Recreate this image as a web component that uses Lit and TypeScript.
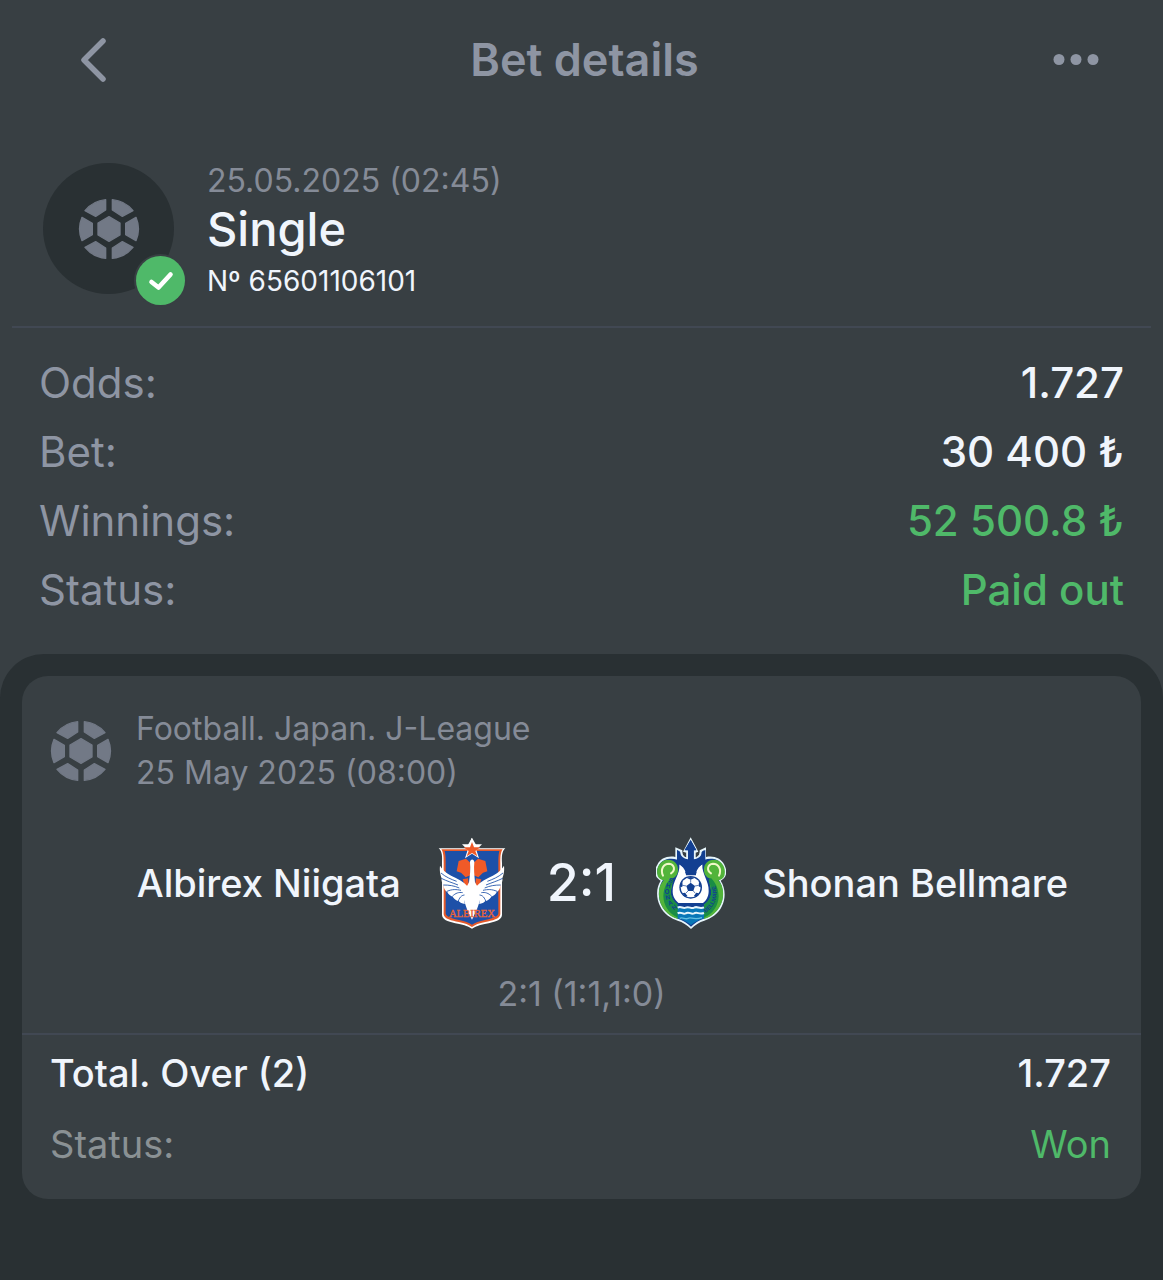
import { LitElement, html, svg, css } from "lit";
import { customElement, property } from "lit/decorators.js";

interface Fact {
  label: string;
  value: string;
  positive?: boolean;
}

const summary: Fact[] = [
  { label: "Odds:", value: "1.727" },
  { label: "Bet:", value: "30 400 ₺" },
  { label: "Winnings:", value: "52 500.8 ₺", positive: true },
  { label: "Status:", value: "Paid out", positive: true },
];

/* Football made of six rim panels around a hexagon. */
@customElement("ball-icon")
export class BallIcon extends LitElement {
  static styles = css`
    :host {
      display: block;
      flex: none;
      width: 62px;
      height: 62px;
      color: #727986;
    }
    svg {
      display: block;
      width: 100%;
      height: 100%;
    }
  `;

  render() {
    const corner = "M-10 -88V-57L-40 -38L-72 -55A91 91 0 0 1 -10 -88Z";
    const side = "M-81 -35L-50 -17V17L-81 35A89 89 0 0 1 -81 -35Z";
    return html`<svg viewBox="-93 -93 186 186" aria-hidden="true">
      <g fill="currentColor" stroke="currentColor" stroke-width="4" stroke-linejoin="round">
        <path d="M0 -37L33 -18V18L0 37L-33 18V-18Z" />
        <path d=${corner} />
        <path d=${corner} transform="scale(-1 1)" />
        <path d=${corner} transform="scale(1 -1)" />
        <path d=${corner} transform="scale(-1 -1)" />
        <path d=${side} />
        <path d=${side} transform="scale(-1 1)" />
      </g>
    </svg>`;
  }
}

@customElement("team-crest")
export class TeamCrest extends LitElement {
  @property() team = "";

  static styles = css`
    :host {
      display: block;
      flex: none;
      width: 70px;
      height: 92px;
    }
    svg {
      display: block;
      width: 100%;
      height: 100%;
    }
    .serif {
      font-family: "Liberation Serif", serif;
    }
    .sans {
      font-family: "Liberation Sans", sans-serif;
      font-weight: 700;
    }
  `;

  private albirex() {
    const wing = svg`
      <path fill="#fff" d="M153 195C143 178 128 167 108 158C91 151 74 141 62 122C60 140 64 151 67 160C65 167 69 176 73 182C73 190 78 197 84 201C87 209 94 213 100 215C105 223 112 227 118 228C124 235 132 237 138 237L153 245Z"/>
      <g stroke="#1d50a8" stroke-width="2.6" fill="none">
        <path d="M65 144C80 157 96 163 112 169"/>
        <path d="M66 160C84 169 99 173 116 180"/>
        <path d="M72 180C90 180 104 182 120 189"/>
        <path d="M83 199C99 192 111 193 125 196"/>
        <path d="M99 214C109 204 118 201 130 203"/>
        <path d="M117 228C122 214 129 210 137 210"/>
        <path d="M137 236C137 226 139 220 143 216"/>
      </g>`;
    return html`<svg viewBox="53 36 210 276" role="img" aria-label="Albirex Niigata crest">
      <path fill="#fff" d="M58 70H140L158 38L176 70H258C247 80 247 95 248 115V270C247 287 221 292 200 296C180 300 168 304 158 311C148 304 136 300 116 296C95 292 69 287 68 270V115C69 95 69 80 58 70Z"/>
      <path fill="#e4592a" d="M66 73H250C243 83 243 98 243 115V268C242 282 219 287 198 291C179 295 168 299 158 306C148 299 137 295 118 291C97 287 74 282 73 268V115C73 98 73 83 66 73Z"/>
      <path fill="#1d50a8" d="M76 78H240C237 90 237 103 237 117V265C236 277 215 281 197 285C179 289 168 293 158 299C148 293 137 289 119 285C101 281 80 277 79 265V117C79 103 79 90 76 78Z"/>
      <path fill="#f05a28" d="M118 108L140 101L153 113V151L139 157L125 143L112 139ZM198 108L176 101L163 113V151L177 157L191 143L204 139Z"/>
      <path fill="#f05a28" d="M130 163L146 160L151 198L137 184ZM186 163L170 160L165 198L179 184Z"/>
      ${wing}
      <g transform="translate(316 0) scale(-1 1)">${wing}</g>
      <path fill="#fff" d="M152 112C153 101 164 101 165 112C163 129 165 150 167 172C177 187 181 202 181 216C181 239 170 261 158 284C146 261 135 239 135 216C135 202 140 187 149 172C152 151 154 132 152 112Z"/>
      <path fill="#fff" d="M157 38L165 58L188 58L171 75L179 100L158 86L137 100L145 75L128 58H150Z"/>
      <path fill="#f05a28" d="M158 51L164 67L183 67L168 78L174 94L158 84L142 94L148 78L133 67H152Z"/>
      <text class="serif" x="158" y="277" text-anchor="middle" font-size="32" fill="#e86436" stroke="#e86436" stroke-width="1">ALBIREX</text>
    </svg>`;
  }

  private bellmare() {
    const scroll = svg`
      <path fill="#52b43a" d="M58 153C51 127 66 105 89 104C112 104 123 123 118 143C115 155 104 160 99 161C105 168 101 181 98 196C95 216 106 231 119 239V282C89 275 64 246 62 214C60 190 67 176 76 166C67 164 61 160 58 153Z"/>
      <path fill="none" stroke="#f0f8c8" stroke-width="6" stroke-linecap="round" d="M74 152C65 132 76 116 92 116C109 118 112 136 98 145"/>
      <path fill="#1a8d45" d="M98 159L105 164C99 184 96 196 98 208C101 223 110 234 119 239V278C92 266 76 243 75 213C76 188 85 173 98 159Z"/>`;
    return html`<svg viewBox="53 36 210 276" role="img" aria-label="Shonan Bellmare crest">
      <path fill="#e6f5fb" d="M157 37L180 80L172 83V99C184 95 184 86 184 76L203 67V96C226 91 248 100 258 119C271 145 260 160 247 167C261 188 263 219 251 243C240 268 216 281 198 287C183 291 170 300 158 312C146 300 133 291 118 287C100 281 76 268 65 243C53 219 53 188 67 167C52 159 43 142 57 119C66 100 88 91 111 96V67L132 76C132 87 134 95 144 99V83L134 80Z"/>
      <path fill="#123f91" d="M157 45L174 75L166 76V106C184 105 191 95 191 80L198 75V104C220 98 241 101 252 120C263 140 256 155 240 163C256 186 258 217 246 240C234 264 213 276 196 281C181 286 169 294 158 305C147 294 134 286 119 281C101 275 80 262 69 239C58 216 59 187 74 164C56 156 51 138 63 119C74 101 97 98 117 104V75L124 80C124 95 132 105 149 106V76L139 75Z"/>
      <path fill="#fff" d="M123 118C134 126 143 136 143 151H173C173 136 181 126 192 118C190 149 213 168 211 199C211 216 202 229 192 236H123C112 228 103 216 103 199C102 169 126 149 123 118Z"/>
      ${scroll}
      <g transform="translate(316 0) scale(-1 1)">${scroll}</g>
      <path fill="#123f91" d="M116 75L126 81C126 94 136 101 149 103V76H139L157 45L174 76H166V103C181 101 190 94 190 81L201 75V111C193 120 180 123 169 129L175 145H140L147 129C134 124 121 120 116 111Z"/>
      <path fill="none" stroke="#e6f5fb" stroke-width="3" d="M146 84V99C137 97 130 92 128 80M169 84V99C178 97 185 92 187 80"/>
      <circle cx="157" cy="187" r="34" fill="#123f91"/>
      <circle cx="157" cy="187" r="30" fill="#fff"/>
      <g fill="#123f91">
        <path d="M157 173L170 183L165 198H149L144 183Z"/>
        <path d="M144 158L157 164L170 158L157 156ZM182 170L181 184L188 188L186 174ZM132 170L133 184L126 188L128 174ZM174 203L166 214L174 215L182 205ZM140 203L148 214L140 215L132 205Z"/>
      </g>
      <path fill="none" stroke="#123f91" stroke-width="2" d="M157 173V164M170 183L181 181M165 198L171 205M149 198L142 205M144 183L133 181"/>
      <path fill="#0877b7" d="M118 234H197V280C180 285 169 292 158 300C147 292 136 285 118 280Z"/>
      <path fill="#123f91" d="M118 234H197V247C186 255 179 243 168 248C158 256 149 243 139 248C130 253 124 248 118 245Z"/>
      <path fill="none" stroke="#e6f5fb" stroke-width="6" d="M118 248C128 242 133 252 142 248C152 242 158 253 167 248C177 242 182 253 197 247M118 265C128 258 133 270 142 265C152 258 158 270 167 265C177 259 182 270 197 264"/>
      <path fill="none" stroke="#62bfe1" stroke-width="4" d="M124 280C134 274 140 285 149 280C158 275 165 286 191 278"/>
      <path id="right-arc" fill="none" d="M201 264C241 238 243 190 220 161"/>
      <text class="sans" font-size="17" fill="#123f91"><textPath href="#right-arc">BELLMARE</textPath></text>
      <g class="sans" font-size="19" fill="#123f91" text-anchor="middle">
        <text transform="translate(98 166) rotate(15)" y="7">S</text>
        <text transform="translate(90 181) rotate(10)" y="7">H</text>
        <text transform="translate(86 199)" y="7">O</text>
        <text transform="translate(88 217) rotate(-12)" y="7">N</text>
        <text transform="translate(95 233) rotate(-25)" y="7">A</text>
        <text transform="translate(107 247) rotate(-38)" y="7">N</text>
      </g>
    </svg>`;
  }

  render() {
    return this.team === "albirex" ? this.albirex() : this.bellmare();
  }
}

@customElement("app-root")
export class AppRoot extends LitElement {
  static styles = css`
    :host {
      display: flex;
      flex-direction: column;
      min-height: 100vh;
      background: #383f43;
      color: #f0f5fc;
      font-family: Inter, "Liberation Sans", sans-serif;
    }
    h1,
    h2,
    p,
    dl,
    dd {
      margin: 0;
    }
    .bar {
      display: grid;
      grid-template-columns: 96px 1fr 96px;
      align-items: center;
      height: 120px;
      padding: 0 39px 0 45px;
      color: #8e95a3;
    }
    .bar h1 {
      text-align: center;
      font-size: 45px;
      line-height: 56px;
      font-weight: 600;
    }
    .icon-button {
      display: flex;
      align-items: center;
      justify-content: center;
      height: 72px;
      padding: 0 12px;
      border: 0;
      background: none;
      color: inherit;
      cursor: pointer;
    }
    .coupon {
      display: flex;
      align-items: flex-start;
      gap: 33px;
      margin: 0 12px;
      padding: 39px 31px 19px;
      border-bottom: 2px solid #414853;
    }
    .avatar {
      position: relative;
      display: flex;
      flex: none;
      align-items: center;
      justify-content: center;
      width: 131px;
      height: 131px;
      margin-top: 4px;
      border-radius: 50%;
      background: #293033;
    }
    .badge {
      position: absolute;
      right: -13px;
      bottom: -13px;
      width: 53px;
      height: 53px;
    }
    .muted {
      color: #858b97;
    }
    .small {
      font-size: 32px;
      line-height: 44px;
    }
    .coupon h2 {
      font-size: 47px;
      line-height: 52px;
      font-weight: 500;
    }
    .number {
      font-size: 28px;
      line-height: 52px;
    }
    .facts {
      padding: 20px 39px 30px;
      font-size: 42px;
      line-height: 69px;
    }
    .row {
      display: flex;
      justify-content: space-between;
      gap: 24px;
    }
    .facts dt {
      color: #8e95a3;
    }
    .facts dd {
      font-weight: 500;
    }
    .row .positive {
      color: #4fb969;
    }
    .events {
      flex: 1;
      padding: 22px;
      border-radius: 44px 44px 0 0;
      background: #293033;
    }
    .card {
      border-radius: 26px;
      background: #383f43;
    }
    .league {
      display: flex;
      align-items: center;
      gap: 24px;
      padding: 31px 28px 42px;
    }
    .teams {
      display: grid;
      grid-template-columns: 1fr auto auto auto 1fr;
      align-items: center;
      column-gap: 36px;
      font-size: 38px;
      line-height: 48px;
      font-weight: 500;
    }
    .home {
      text-align: right;
    }
    .score {
      padding: 0 4px;
      font-size: 52px;
    }
    .periods {
      padding: 43px 0 17px;
      text-align: center;
      font-size: 34px;
      line-height: 44px;
    }
    .outcome {
      display: flex;
      flex-direction: column;
      gap: 23px;
      padding: 14px 30px 31px 28px;
      border-top: 2px solid #414853;
      font-size: 38px;
      line-height: 48px;
    }
    .outcome .main {
      font-weight: 500;
    }
    .outcome .muted {
      color: #8a9194;
    }
  `;

  render() {
    return html`
      <header class="bar">
        <button class="icon-button" aria-label="Back">
          <svg width="28" height="46" viewBox="0 0 28 46" fill="none" stroke="currentColor" stroke-width="5.5" stroke-linecap="round" stroke-linejoin="round">
            <path d="M24 4L5 23L24 42" />
          </svg>
        </button>
        <h1>Bet details</h1>
        <button class="icon-button" aria-label="More">
          <svg width="46" height="12" viewBox="0 0 46 12" fill="currentColor">
            <circle cx="6" cy="5.500" r="5.5" />
            <circle cx="23" cy="5.500" r="5.5" />
            <circle cx="40" cy="5.500" r="5.5" />
          </svg>
        </button>
      </header>
      <section class="coupon">
        <div class="avatar">
          <ball-icon></ball-icon>
          <svg class="badge" viewBox="0 0 53 53" role="img" aria-label="Won">
            <circle cx="26.5" cy="26.5" r="26.5" fill="#383f43" />
            <circle cx="26.5" cy="26.5" r="24.5" fill="#4fb969" />
            <path d="M17.500 28L24.500 33.500L36.500 20.500" fill="none" stroke="#fff" stroke-width="4.600" stroke-linecap="round" stroke-linejoin="round" />
          </svg>
        </div>
        <div>
          <p class="small muted">25.05.2025 (02:45)</p>
          <h2>Single</h2>
          <p class="number">Nº 65601106101</p>
        </div>
      </section>
      <dl class="facts">
        ${summary.map(
          (f) => html`<div class="row">
            <dt>${f.label}</dt>
            <dd class=${f.positive ? "positive" : ""}>${f.value}</dd>
          </div>`
        )}
      </dl>
      <main class="events">
        <article class="card">
          <div class="league">
            <ball-icon></ball-icon>
            <div class="small muted">
              <p>Football. Japan. J-League</p>
              <p>25 May 2025 (08:00)</p>
            </div>
          </div>
          <div class="teams">
            <span class="home">Albirex Niigata</span>
            <team-crest team="albirex"></team-crest>
            <span class="score">2:1</span>
            <team-crest team="bellmare"></team-crest>
            <span>Shonan Bellmare</span>
          </div>
          <p class="periods muted">2:1 (1:1,1:0)</p>
          <div class="outcome">
            <div class="row main"><span>Total. Over (2)</span><span>1.727</span></div>
            <div class="row"><span class="muted">Status:</span><span class="positive">Won</span></div>
          </div>
        </article>
      </main>
    `;
  }
}
